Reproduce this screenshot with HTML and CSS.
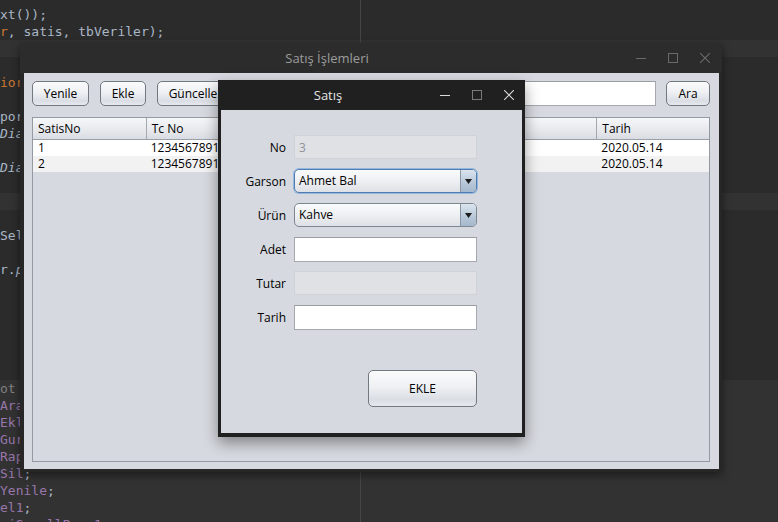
FILE: index.html
```html
<!DOCTYPE html>
<html lang="tr">
<head>
<meta charset="utf-8">
<title>Satış İşlemleri</title>
<link rel="stylesheet" href="styles.css">
</head>
<body>
<div class="desktop">
  <div class="editor">
    <div class="ln"><span>xt());</span></div>
    <div class="ln"><span class="kw">r</span><span>, satis, tbVeriler);</span></div>
    <div class="ln cur"></div>
    <div class="ln"></div>
    <div class="ln"><span class="kw">ior</span></div>
    <div class="ln"></div>
    <div class="ln"><span>port</span></div>
    <div class="ln"><span class="it">Dialog</span></div>
    <div class="ln"></div>
    <div class="ln"><span class="it">Dialog</span></div>
    <div class="ln"></div>
    <div class="ln cur"></div>
    <div class="ln"></div>
    <div class="ln"><span>Selected</span></div>
    <div class="ln"></div>
    <div class="ln"><span>r.</span><span class="it">pack</span></div>
    <div class="ln"></div>
    <div class="ln"></div>
    <div class="ln"></div>
    <div class="ln"></div>
    <div class="ln"></div>
    <div class="ln"></div>
    <div class="ln g"><span class="cm">ot modify</span></div>
    <div class="ln g"><span class="fld">Ara</span><span>;</span></div>
    <div class="ln g"><span class="fld">Ekle</span><span>;</span></div>
    <div class="ln g"><span class="fld">Gurcelle</span><span>;</span></div>
    <div class="ln g"><span class="fld">Rapor</span><span>;</span></div>
    <div class="ln g"><span class="fld">Sil</span><span>;</span></div>
    <div class="ln g"><span class="fld">Yenile</span><span>;</span></div>
    <div class="ln g"><span class="fld">el1</span><span>;</span></div>
    <div class="ln g"><span> </span><span class="fld">jScrollPane1</span><span>;</span></div>
  </div>

  <section class="win win-main">
    <header class="titlebar">
      <div class="title title-main">Satış İşlemleri</div>
      <div class="controls controls-main">
        <svg viewBox="0 0 10 10"><line x1="0" y1="5.5" x2="10" y2="5.5" stroke="currentColor" stroke-width="1"/></svg>
        <svg viewBox="0 0 10 10"><rect x="0.5" y="0.5" width="9" height="9" fill="none" stroke="currentColor" stroke-width="1"/></svg>
        <svg viewBox="0 0 10 10"><path d="M0 0 L10 10 M10 0 L0 10" stroke="currentColor" stroke-width="1.1" fill="none"/></svg>
      </div>
    </header>
    <div class="panel main-panel">
      <div class="toolbar">
        <div class="btn w-yenile">Yenile</div>
        <div class="btn w-ekle">Ekle</div>
        <div class="btn w-guncelle">Güncelle</div>
        <div class="btn w-sil">Sil</div>
        <div class="btn w-rapor">Rapor</div>
        <div class="spacer"></div>
        <div class="field search"></div>
        <div class="btn w-ara">Ara</div>
      </div>
      <div class="table">
        <div class="trow thead">
          <div class="cell">SatisNo</div>
          <div class="cell">Tc No</div>
          <div class="cell">Garson</div>
          <div class="cell">Ürün</div>
          <div class="cell">Adet</div>
          <div class="cell">Tarih</div>
        </div>
        <div class="trow">
          <div class="cell">1</div>
          <div class="cell">12345678910</div>
          <div class="cell">Ahmet Bal</div>
          <div class="cell">Kahve</div>
          <div class="cell">2</div>
          <div class="cell">2020.05.14</div>
        </div>
        <div class="trow alt">
          <div class="cell">2</div>
          <div class="cell">12345678910</div>
          <div class="cell">Ahmet Bal</div>
          <div class="cell">Çay</div>
          <div class="cell">1</div>
          <div class="cell">2020.05.14</div>
        </div>
      </div>
    </div>
  </section>

  <section class="win win-dialog">
    <header class="titlebar">
      <div class="title title-dialog">Satış</div>
      <div class="controls controls-dialog">
        <svg class="on" viewBox="0 0 10 10"><line x1="0" y1="5.5" x2="10" y2="5.5" stroke="currentColor" stroke-width="1"/></svg>
        <svg class="off" viewBox="0 0 10 10"><rect x="0.5" y="0.5" width="9" height="9" fill="none" stroke="currentColor" stroke-width="1"/></svg>
        <svg class="on" viewBox="0 0 10 10"><path d="M0 0 L10 10 M10 0 L0 10" stroke="currentColor" stroke-width="1.1" fill="none"/></svg>
      </div>
    </header>
    <div class="panel dialog-panel">
      <div class="form">
        <div class="label">No</div>
        <div class="field disabled"><span class="dis-text">3</span></div>

        <div class="label">Garson</div>
        <div class="combo focus">
          <span class="combo-text">Ahmet Bal</span>
          <span class="combo-arrow"><svg viewBox="0 0 7 5"><polygon points="0,0 7,0 3.5,5" fill="#1c1c1c"/></svg></span>
        </div>

        <div class="label">Ürün</div>
        <div class="combo">
          <span class="combo-text">Kahve</span>
          <span class="combo-arrow"><svg viewBox="0 0 7 5"><polygon points="0,0 7,0 3.5,5" fill="#1c1c1c"/></svg></span>
        </div>

        <div class="label">Adet</div>
        <div class="field"></div>

        <div class="label">Tutar</div>
        <div class="field disabled"></div>

        <div class="label">Tarih</div>
        <div class="field"></div>

        <div class="btn btn-big">EKLE</div>
      </div>
    </div>
  </section>
</div>
</body>
</html>
```
FILE: styles.css
```css
* { box-sizing: border-box; }

html, body {
  margin: 0;
  height: 100%;
}

body {
  background: #2b2b2b;
  overflow: hidden;
  font-family: "Open Sans", "Noto Sans", sans-serif;
  font-size: 12px;
  color: #000;
}

.desktop {
  position: relative;
  width: 778px;
  height: 522px;
  overflow: hidden;
}

/* ---------- code editor background ---------- */
.editor {
  height: 100%;
  padding-top: 6px;
  font-family: "DejaVu Sans Mono", "Liberation Mono", monospace;
  font-size: 13px;
  line-height: 17px;
  color: #a9b7c6;
}

.editor::after {
  content: "";
  position: absolute;
  left: 360px;
  top: 0;
  bottom: 0;
  width: 1px;
  background: #454545;
}

.ln {
  height: 17px;
  white-space: pre;
}

.ln.cur { background: #323232; }
.ln.g { background: #323232; }

.kw { color: #cc7832; }
.fld { color: #9876aa; }
.cm { color: #808080; }
.it { font-style: italic; }

/* ---------- windows ---------- */
.win {
  position: absolute;
  display: flex;
  flex-direction: column;
}

.win-main {
  left: 20px;
  top: 43px;
  width: 702px;
  height: 429px;
  background: #272727;
  box-shadow: 0 3px 8px rgba(0, 0, 0, 0.45);
}

.win-main .titlebar { background: #2c2c2c; }

.win-dialog {
  left: 218px;
  top: 80px;
  width: 307px;
  height: 357px;
  background: #202020;
  box-shadow: 0 6px 14px rgba(0, 0, 0, 0.4);
}

.titlebar {
  height: 30px;
  flex: none;
  display: flex;
  align-items: center;
}

.title {
  flex: 1;
  text-align: center;
  font-size: 13px;
}

.title-main { color: #9d9d9d; }
.title-dialog { color: #e6e6e6; }

.controls {
  display: flex;
  align-items: center;
  gap: 22px;
  padding: 0 12px 0 2px;
}

.controls svg {
  display: block;
  width: 10px;
  height: 10px;
}

.controls-main { color: #6a6a6a; }
.controls-dialog { padding-right: 11px; }
.controls-dialog .on { color: #dadada; }
.controls-dialog .off { color: #7a7a7a; }

.panel {
  flex: 1;
  background: #d6d9df;
}

.main-panel {
  margin: 0 3px 3px 4px;
  padding: 8px 9px 7px 8px;
  display: flex;
  flex-direction: column;
}

.dialog-panel {
  margin: 0 3px 4px 3px;
  padding: 25px 0 0 5px;
}

/* ---------- controls ---------- */
.btn {
  height: 25px;
  flex: none;
  display: flex;
  align-items: center;
  justify-content: center;
  border: 1px solid #727880;
  border-radius: 5px;
  background: linear-gradient(#fbfbfc 0%, #eef0f3 45%, #dadee4 82%, #e6e9ee 100%);
  color: #000;
  font-size: 12px;
}

.w-yenile { width: 57px; }
.w-ekle { width: 46px; }
.w-guncelle { width: 72px; }
.w-sil { width: 40px; }
.w-rapor { width: 56px; }
.w-ara { width: 44px; }

.toolbar {
  display: flex;
  gap: 11px;
  height: 25px;
  flex: none;
}

.spacer { flex: 1; }

.field {
  height: 25px;
  background: #fff;
  border: 1px solid #a5a8ae;
  border-top-color: #9a9da3;
}

.search {
  width: 200px;
  margin-right: -1px;
}

.field.disabled {
  height: 24px;
  background: #dfe1e5;
  border-color: #d0d3d8;
  display: flex;
  align-items: center;
  padding-left: 4px;
}

.dis-text { color: #8f9296; }

/* ---------- table ---------- */
.table {
  flex: 1;
  margin-top: 11px;
  border: 1px solid #959aa2;
}

.trow {
  display: grid;
  grid-template-columns: repeat(6, 1fr);
  height: 16px;
  line-height: 16px;
  background: #fff;
}

.trow.alt { background: #f2f2f2; }

.trow .cell {
  padding-left: 5px;
  white-space: nowrap;
  overflow: hidden;
}

.trow.thead {
  height: 22px;
  line-height: 21px;
  background: linear-gradient(#f6f7f9, #e6e8ec 60%, #d9dce2);
  border-bottom: 1px solid #9aa0a8;
}

.thead .cell + .cell { border-left: 1px solid #a3a8b0; }

/* ---------- dialog form ---------- */
.form {
  display: grid;
  grid-template-columns: 60px 183px;
  column-gap: 8px;
  row-gap: 10px;
  grid-auto-rows: 24px;
}

.label {
  align-self: center;
  text-align: right;
}

.combo {
  display: flex;
  height: 24px;
  border: 1px solid #7d8792;
  border-radius: 5px;
  overflow: hidden;
  background: linear-gradient(#fafbfc, #eceef1 55%, #dde0e5);
}

.combo.focus {
  border-color: #4f7db0;
  box-shadow: 0 0 0 1px #93b7de;
}

.combo-text {
  flex: 1;
  padding-left: 4px;
  line-height: 22px;
}

.combo-arrow {
  width: 16px;
  display: flex;
  align-items: center;
  justify-content: center;
  border-left: 1px solid #8a96a3;
  background: linear-gradient(#dbe4ee, #b7c7d8 60%, #a5b8cc);
}

.combo-arrow svg {
  width: 7px;
  height: 5px;
  display: block;
}

.btn-big {
  grid-column: 2;
  justify-self: end;
  width: 109px;
  height: 37px;
  margin-top: 31px;
}
```
